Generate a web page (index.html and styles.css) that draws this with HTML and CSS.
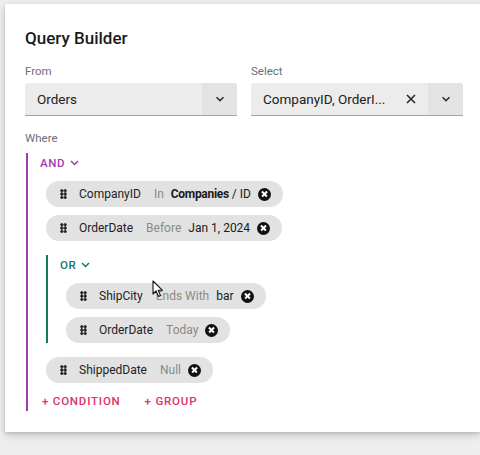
FILE: index.html
```html
<!DOCTYPE html>
<html>
<head>
<meta charset="utf-8">
<link rel="stylesheet" href="styles.css">
</head>
<body>
<div class="card">
  <h1 class="title">Query Builder</h1>
  <div class="row">
    <div class="field">
      <div class="label">From</div>
      <div class="select">
        <span class="value">Orders</span>
        <span class="toggle"><svg width="10" height="6" viewBox="0 0 10 6"><path d="M1.5 1.2 5 4.6 8.5 1.2" fill="none" stroke="#333" stroke-width="1.6"/></svg></span>
      </div>
    </div>
    <div class="field">
      <div class="label">Select</div>
      <div class="select">
        <span class="value">CompanyID, OrderI...</span>
        <span class="clear"><svg width="10" height="10" viewBox="0 0 10 10"><path d="M1 1 9 9M9 1 1 9" stroke="#222" stroke-width="1.5"/></svg></span>
        <span class="toggle"><svg width="10" height="6" viewBox="0 0 10 6"><path d="M1.5 1.2 5 4.6 8.5 1.2" fill="none" stroke="#333" stroke-width="1.6"/></svg></span>
      </div>
    </div>
  </div>
  <div class="label where">Where</div>

  <div class="group and">
    <div class="group-head">AND <svg width="9" height="6" viewBox="0 0 9 6"><path d="M1 1 4.5 4.5 8 1" fill="none" stroke="currentColor" stroke-width="1.5"/></svg></div>
    <div class="items">
      <div class="chip"><span class="handle"></span><span class="f">CompanyID</span><span class="op">In</span><span class="v"><b>Companies</b> / ID</span><span class="x"></span></div>
      <div class="chip"><span class="handle"></span><span class="f">OrderDate</span><span class="op">Before</span><span class="v">Jan 1, 2024</span><span class="x"></span></div>

      <div class="group or">
        <div class="group-head">OR <svg width="9" height="6" viewBox="0 0 9 6"><path d="M1 1 4.5 4.5 8 1" fill="none" stroke="currentColor" stroke-width="1.5"/></svg></div>
        <div class="items">
          <div class="chip"><span class="handle"></span><span class="f">ShipCity</span><span class="op">Ends With</span><span class="v">bar</span><span class="x"></span></div>
          <div class="chip"><span class="handle"></span><span class="f">OrderDate</span><span class="op">Today</span><span class="x"></span></div>
        </div>
      </div>

      <div class="chip"><span class="handle"></span><span class="f">ShippedDate</span><span class="op">Null</span><span class="x"></span></div>
    </div>
    <div class="actions">
      <span class="btn">+ CONDITION</span>
      <span class="btn">+ GROUP</span>
    </div>
  </div>
</div>
<svg class="cursor" width="12" height="18" viewBox="0 0 12 18"><path d="M1 1 L1 14 L4 11 L6.5 16.5 L8.5 15.6 L6.2 10.3 L10.5 10.3 Z" fill="#fff" stroke="#111" stroke-width="1.1" stroke-linejoin="round"/></svg>
</body>
</html>
```
FILE: styles.css
```css
html, body { margin: 0; padding: 0; }
body {
  width: 480px;
  height: 455px;
  overflow: hidden;
  background: #eeeeee;
  font-family: Roboto, "Noto Sans", sans-serif;
  color: #1f1f1f;
  position: relative;
}
.card {
  margin: 4px 0 0 5px;
  width: 475px;
  height: 428px;
  background: #fff;
  box-shadow: 0 3px 8px rgba(0,0,0,0.18), 0 1px 3px rgba(0,0,0,0.12);
  padding: 0 20px;
  box-sizing: border-box;
  clip-path: inset(-20px 0 -20px -20px);
}
.title {
  margin: 0;
  padding-top: 24px;
  font-size: 17px;
  font-weight: 500;
  line-height: 20px;
  color: #1b1b1b;
}
.row {
  display: flex;
  gap: 14px;
  margin-top: 16px;
  width: 440px;
}
.field { width: 212px; flex: none; }
.label {
  font-size: 11.5px;
  color: #6d6e78;
  line-height: 14px;
}
.select {
  margin-top: 5px;
  height: 33px;
  background: #ececec;
  border-bottom: 1px solid #a5a5a5;
  border-radius: 3px 3px 0 0;
  display: flex;
  align-items: center;
  box-sizing: border-box;
}
.select .value {
  flex: 1;
  padding-left: 12px;
  font-size: 13.5px;
  color: #222;
}
.select .clear {
  width: 22px;
  display: flex;
  align-items: center;
  justify-content: flex-start;
}
.select .toggle {
  width: 35px;
  height: 32px;
  background: #e3e3e3;
  display: flex;
  align-items: center;
  justify-content: center;
  border-radius: 0 3px 0 0;
}
.where { margin-top: 15px; }

.group {
  border-left: 2px solid #a23bb0;
  display: flex;
  flex-direction: column;
}
.group.and { margin-top: 8px; margin-left: 1px; padding-bottom: 2px; }
.group.or { border-left-color: #13795f; margin-top: 6px; }
.group-head {
  display: flex;
  align-items: center;
  gap: 5px;
  padding-left: 12px;
  height: 20px;
  font-size: 11.5px;
  font-weight: 500;
  letter-spacing: 0.6px;
  color: #a23bb0;
}
.group.or > .group-head { color: #13795f; }
.items {
  display: flex;
  flex-direction: column;
  align-items: flex-start;
  gap: 8px;
  padding-left: 18px;
  margin-top: 8px;
}
.group.or + .chip { margin-top: 6px; }
.chip {
  height: 26px;
  border-radius: 13px;
  background: #e2e2e2;
  display: flex;
  align-items: center;
  padding: 0 12px 0 14px;
  font-size: 12px;
  white-space: nowrap;
}
.handle {
  width: 7px;
  height: 10px;
  background-image: radial-gradient(circle, #151515 1.3px, transparent 1.5px);
  background-size: 3.5px 3.4px;
  margin-right: 12px;
}
.f { color: #222; }
.op { color: #8a8a8a; margin-left: 13px; }
.v { color: #1a1a1a; margin-left: 7px; }
.v b { font-weight: 700; letter-spacing: -0.3px; }
.x {
  width: 13px;
  height: 13px;
  border-radius: 50%;
  background: #111;
  margin-left: 7px;
  position: relative;
}
.x::before, .x::after {
  content: "";
  position: absolute;
  left: 3px;
  top: 5.7px;
  width: 7px;
  height: 1.7px;
  background: #fff;
  transform: rotate(45deg);
}
.x::after { transform: rotate(-45deg); }
.actions {
  display: flex;
  gap: 24px;
  padding-left: 14px;
  margin-top: 10px;
  height: 16px;
  align-items: center;
}
.btn {
  font-size: 11.5px;
  font-weight: 500;
  letter-spacing: 0.8px;
  color: #e0306f;
}
.cursor {
  position: absolute;
  left: 152px;
  top: 280px;
}
```
